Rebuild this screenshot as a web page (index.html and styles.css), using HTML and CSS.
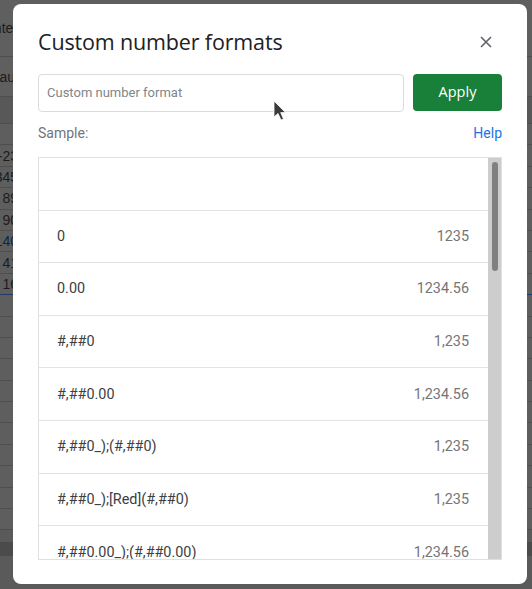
FILE: index.html
```html
<!DOCTYPE html>
<html>
<head>
<meta charset="utf-8">
<link rel="stylesheet" href="styles.css">
</head>
<body>
<div class="sheet">
  <div class="srow r-h1"><span class="cell">Center</span></div>
  <div class="srow r-h2"><span class="cell c-def">Default</span></div>
  <div class="srow r-band"></div>
  <div class="srow"><span class="cell"></span></div>
  <div class="srow"><span class="cell">-23</span></div>
  <div class="srow"><span class="cell">345</span></div>
  <div class="srow"><span class="cell">89</span></div>
  <div class="srow"><span class="cell">90</span></div>
  <div class="srow"><span class="cell c-blue">140</span></div>
  <div class="srow"><span class="cell">41</span></div>
  <div class="srow r-sel"><span class="cell">16</span></div>
  <div class="srow"></div>
  <div class="srow"></div>
  <div class="srow"></div>
  <div class="srow"></div>
  <div class="srow"></div>
  <div class="srow"></div>
  <div class="srow"></div>
  <div class="srow"></div>
  <div class="srow"></div>
  <div class="srow"></div>
  <div class="srow"></div>
  <div class="srow r-dark"></div>
</div>

<div class="dialog">
  <div class="header">
    <h1 class="title">Custom number formats</h1>
    <span class="close">
      <svg width="24" height="24" viewBox="0 0 24 24"><path d="M7 7 L17 17 M17 7 L7 17" stroke="#5f6368" stroke-width="1.6" fill="none"/></svg>
    </span>
  </div>
  <div class="inputrow">
    <div class="input">Custom number format</div>
    <div class="apply">Apply</div>
  </div>
  <div class="samplerow">
    <span class="sample">Sample:</span>
    <span class="help">Help</span>
  </div>
  <div class="list">
    <div class="rows">
      <div class="row empty"></div>
      <div class="row"><span class="fmt">0</span><span class="val">1235</span></div>
      <div class="row"><span class="fmt">0.00</span><span class="val">1234.56</span></div>
      <div class="row"><span class="fmt">#,##0</span><span class="val">1,235</span></div>
      <div class="row"><span class="fmt">#,##0.00</span><span class="val">1,234.56</span></div>
      <div class="row"><span class="fmt">#,##0_);(#,##0)</span><span class="val">1,235</span></div>
      <div class="row"><span class="fmt">#,##0_);[Red](#,##0)</span><span class="val">1,235</span></div>
      <div class="row"><span class="fmt">#,##0.00_);(#,##0.00)</span><span class="val">1,234.56</span></div>
    </div>
    <div class="scrollbar"><div class="thumb"></div></div>
  </div>
  <svg class="cursor" width="14" height="22" viewBox="0 0 14 22"><path d="M1 1 L1 17 L5 13.5 L8 20 L10.5 19 L7.7 12.6 L12.5 12.6 Z" fill="#3a3a3a" stroke="#ffffff" stroke-width="0.8"/></svg>
</div>
</body>
</html>
```
FILE: styles.css
```css
html, body {
  margin: 0;
  padding: 0;
}
body {
  width: 532px;
  height: 589px;
  overflow: hidden;
  background: #5a5a5a;
  font-family: Roboto, "Liberation Sans", Arial, sans-serif;
  position: relative;
}
.sheet {
  display: flex;
  flex-direction: column;
  width: 532px;
}
.srow {
  height: 20.4px;
  border-bottom: 1px solid #4e4e4e;
  background: #5e5e5e;
  display: flex;
  align-items: center;
  font-family: "Liberation Sans", Arial, sans-serif;
  font-size: 14px;
  color: #1c1c1c;
}
.r-h1 { height: 56px; background: #5f5f5f; }
.r-h2 { height: 39px; background: #5f5f5f; }
.r-band { height: 26px; background: #585858; }
.r-sel { border-bottom: 1px solid #1e3a66; }
.r-dark { height: 14px; background: #4b4b4b; border-bottom: none; margin-top: 12px; }
.cell {
  width: 18px;
  display: flex;
  justify-content: flex-end;
  white-space: nowrap;
}
.c-def { width: 22px; }
.c-blue { color: #0c2551; }

.dialog {
  position: absolute;
  left: 13px;
  top: 4px;
  width: 514px;
  height: 580px;
  box-sizing: border-box;
  padding: 24px 25px 24px 25px;
  background: #ffffff;
  border-radius: 8px;
  display: flex;
  flex-direction: column;
}
.header {
  display: flex;
  justify-content: space-between;
  align-items: center;
  height: 28px;
}
.title {
  margin: 0;
  font-family: "Open Sans", sans-serif;
  font-weight: 400;
  font-size: 21.5px;
  line-height: 28px;
  color: #202124;
  letter-spacing: -0.15px;
}
.close {
  width: 24px;
  height: 24px;
  margin-right: 4px;
  display: flex;
}
.inputrow {
  display: flex;
  align-items: flex-start;
  gap: 9px;
  margin-top: 18px;
}
.input {
  width: 366px;
  height: 38px;
  box-sizing: border-box;
  border: 1px solid #dadce0;
  border-radius: 4px;
  padding-left: 8px;
  padding-bottom: 2px;
  display: flex;
  align-items: center;
  font-size: 13px;
  color: #80868b;
}
.apply {
  width: 89px;
  height: 37px;
  box-sizing: border-box;
  padding-bottom: 2px;
  background: #188038;
  border-radius: 4px;
  color: #ffffff;
  font-family: "Open Sans", sans-serif;
  font-weight: 500;
  font-size: 14.5px;
  display: flex;
  align-items: center;
  justify-content: center;
}
.samplerow {
  display: flex;
  justify-content: space-between;
  align-items: center;
  margin-top: 11px;
  line-height: 20px;
  font-size: 14px;
}
.sample { color: #70757a; }
.help { color: #1a73e8; }
.list {
  margin-top: 14px;
  height: 403px;
  border: 1px solid #e0e0e0;
  display: flex;
  overflow: hidden;
}
.rows {
  flex: 1;
  display: flex;
  flex-direction: column;
  overflow: hidden;
}
.row {
  flex: none;
  height: 52.67px;
  box-sizing: border-box;
  border-bottom: 1px solid #e3e3e3;
  display: flex;
  justify-content: space-between;
  align-items: center;
  padding: 0 19px 0 18px;
  font-size: 14.4px;
}
.row.empty { height: 52.5px; }
.fmt { color: #3c4043; }
.val { color: #757575; }
.scrollbar {
  width: 13px;
  background: #cdcdcd;
  display: flex;
  justify-content: center;
  padding-top: 4px;
  box-sizing: border-box;
}
.thumb {
  width: 6px;
  height: 109px;
  background: #808080;
  border-radius: 3px;
}
.cursor {
  position: absolute;
  left: 260px;
  top: 96px;
}
```
